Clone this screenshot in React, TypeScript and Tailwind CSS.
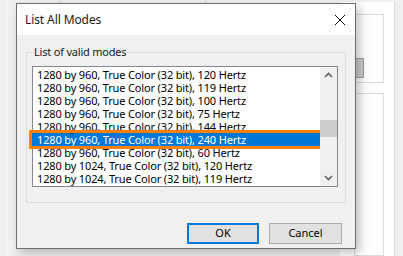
import React from "react";

const modes = [
  "1280 by 960, True Color (32 bit), 120 Hertz",
  "1280 by 960, True Color (32 bit), 119 Hertz",
  "1280 by 960, True Color (32 bit), 100 Hertz",
  "1280 by 960, True Color (32 bit), 75 Hertz",
  "1280 by 960, True Color (32 bit), 144 Hertz",
  "1280 by 960, True Color (32 bit), 240 Hertz",
  "1280 by 960, True Color (32 bit), 60 Hertz",
  "1280 by 1024, True Color (32 bit), 120 Hertz",
  "1280 by 1024, True Color (32 bit), 119 Hertz",
];

const selected = 5;

function Background() {
  return (
    <div className="absolute inset-0 flex bg-[#f0f0f0]">
      <div className="ml-[6px] h-full w-px bg-[#fafafa]" />
      <div className="flex flex-1 flex-col">
        <div className="flex h-[4px]">
          <div className="ml-[53px] w-px bg-[#d9d9d9]" />
          <div className="ml-[144px] w-px bg-[#d9d9d9]" />
        </div>
      </div>
      {/* right panel behind the dialog */}
      <div className="mr-[8px] mt-[2px] flex w-[55px] flex-col gap-[10px] border-r border-[#dcdcdc] bg-white pl-[14px] pt-[12px]">
        <div className="flex h-[74px] w-[30px] items-start border border-[#dcdcdc] pt-[43px]">
          <div className="h-[20px] w-[9px] border border-[#a0a0a0] bg-[#cccccc]" />
        </div>
        <div className="h-[200px] w-[30px] border border-[#dcdcdc]" />
      </div>
    </div>
  );
}

function ScrollBar() {
  return (
    <div className="flex w-[17px] flex-col items-center bg-[#f0f0f0] pb-[5px] pt-[5px]">
      <svg width="9" height="6" viewBox="0 0 9 6">
        <path d="M1 5 L4.5 1.5 L8 5" stroke="#606060" strokeWidth="1.6" fill="none" />
      </svg>
      <div className="mt-[42px] h-[17px] w-[17px] bg-[#cdcdcd]" />
      <div className="flex-1" />
      <svg width="9" height="6" viewBox="0 0 9 6">
        <path d="M1 1 L4.5 4.5 L8 1" stroke="#606060" strokeWidth="1.6" fill="none" />
      </svg>
    </div>
  );
}

function Dialog() {
  return (
    <div className="absolute left-[16px] top-[3px] flex h-[246px] w-[340px] flex-col border border-[#6e6e6e] bg-[#f0f0f0] shadow-[4px_4px_10px_rgba(0,0,0,0.25)]">
      <div className="flex h-[31px] items-center justify-between bg-white pl-[8px] pr-[9px]">
        <span className="text-[12px] tracking-[-0.1px] text-[#1a1a1a]">List All Modes</span>
        <svg width="12" height="12" viewBox="0 0 12 12">
          <path d="M1 1 L11 11 M11 1 L1 11" stroke="#111" strokeWidth="1" />
        </svg>
      </div>

      <fieldset className="mx-[9px] mt-[9px] h-[159px] border border-[#dcdcdc] pl-[5px]">
        <legend className="ml-[1px] px-[1px] text-[11px] leading-[16px] tracking-[-0.2px] text-[#1a1a1a]">
          List of valid modes
        </legend>
        <div className="mt-[6px] flex h-[121px] w-[306px] border border-[#828790] bg-white">
          <div className="flex-1 pt-[1px]">
            {modes.map((m, i) => (
              <div
                key={i}
                className={
                  i === selected
                    ? "-mx-px h-[13px] whitespace-nowrap bg-[#0078d7] pl-[5px] text-[11px] leading-[13px] tracking-[-0.15px] text-white outline-[3px] outline-[#ff7f00]"
                    : "h-[13px] whitespace-nowrap pl-[4px] text-[11px] leading-[13px] tracking-[-0.15px] text-black"
                }
              >
                {m}
              </div>
            ))}
          </div>
          <ScrollBar />
        </div>
      </fieldset>

      <div className="mr-[13px] mt-[20px] flex justify-end gap-[10px]">
        <button className="h-[21px] w-[72px] border-2 border-[#0078d7] bg-[#e1e1e1] text-[11px] text-black">
          OK
        </button>
        <button className="h-[21px] w-[73px] border border-[#adadad] bg-[#e1e1e1] text-[11px] text-black">
          Cancel
        </button>
      </div>
    </div>
  );
}

export default function App() {
  return (
    <div
      className="relative h-[256px] w-[403px] overflow-hidden"
      style={{ fontFamily: '"Noto Sans", "Open Sans", sans-serif' }}
    >
      <Background />
      <Dialog />
    </div>
  );
}
